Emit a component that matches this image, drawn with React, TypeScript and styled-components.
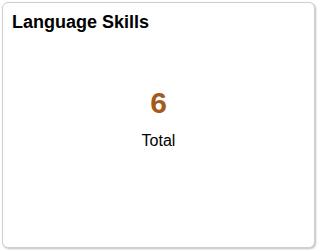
import React from 'react'
import styled, { createGlobalStyle } from 'styled-components'

const GlobalStyle = createGlobalStyle`
  html, body {
    margin: 0;
    padding: 0;
    background: #ffffff;
    font-family: Arial, "Liberation Sans", sans-serif;
  }
`

function App() {
  return (
    <>
      <GlobalStyle />
      <Page>
        <Tile>
          <TileTitle>Language Skills</TileTitle>
          <TileBody>
            <Count>6</Count>
            <CountLabel>Total</CountLabel>
          </TileBody>
        </Tile>
      </Page>
    </>
  )
}

const Page = styled.div`
  width: 318px;
  height: 251px;
  padding: 2px 3px 3px 2px;
  box-sizing: border-box;
`

const Tile = styled.div`
  display: flex;
  flex-direction: column;
  height: 100%;
  box-sizing: border-box;
  border: 1px solid #cfcfcf;
  border-radius: 6px;
  box-shadow: 1px 1px 2px rgba(0, 0, 0, 0.25);
  background: #ffffff;
`

const TileTitle = styled.h2`
  margin: 0;
  padding: 9px 9px 0;
  font-size: 18px;
  line-height: 21px;
  font-weight: bold;
  color: #000000;
`

const TileBody = styled.div`
  display: flex;
  flex-direction: column;
  align-items: center;
  padding-top: 55px;
`

const Count = styled.div`
  font-size: 30px;
  line-height: 30px;
  font-weight: bold;
  color: #a5591b;
`

const CountLabel = styled.div`
  margin-top: 14px;
  font-size: 16px;
  line-height: 18px;
  color: #000000;
`

export default App
